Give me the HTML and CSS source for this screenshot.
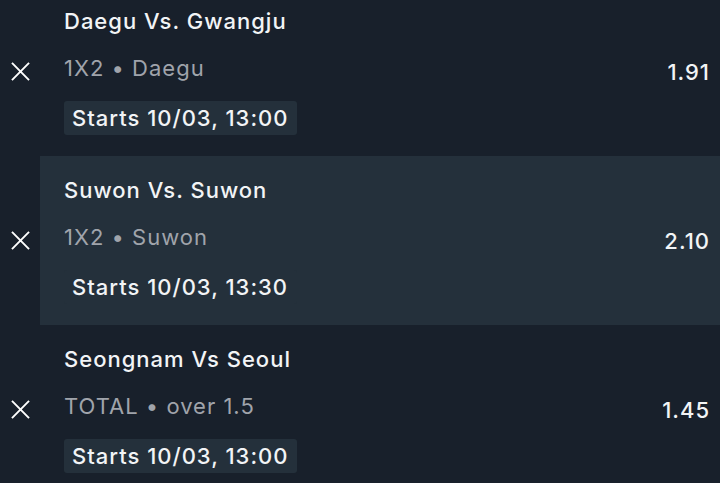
FILE: index.html
```html
<!DOCTYPE html>
<html>
<head>
<meta charset="utf-8">
<link rel="stylesheet" href="styles.css">
</head>
<body>
<div class="list">
  <div class="row">
    <div class="remove"><svg width="20" height="20" viewBox="0 0 20 20"><path d="M1 1L19 19M19 1L1 19" stroke="#fff" stroke-width="2" fill="none"/></svg></div>
    <div class="content">
      <div class="info">
        <div class="title">Daegu Vs. Gwangju</div>
        <div class="market">1X2 • Daegu</div>
        <div class="badge">Starts 10/03, 13:00</div>
      </div>
      <div class="odds">1.91</div>
    </div>
  </div>
  <div class="row active">
    <div class="remove"><svg width="20" height="20" viewBox="0 0 20 20"><path d="M1 1L19 19M19 1L1 19" stroke="#fff" stroke-width="2" fill="none"/></svg></div>
    <div class="content">
      <div class="info">
        <div class="title">Suwon Vs. Suwon</div>
        <div class="market">1X2 • Suwon</div>
        <div class="badge">Starts 10/03, 13:30</div>
      </div>
      <div class="odds">2.10</div>
    </div>
  </div>
  <div class="row">
    <div class="remove"><svg width="20" height="20" viewBox="0 0 20 20"><path d="M1 1L19 19M19 1L1 19" stroke="#fff" stroke-width="2" fill="none"/></svg></div>
    <div class="content">
      <div class="info">
        <div class="title">Seongnam Vs Seoul</div>
        <div class="market">TOTAL • over 1.5</div>
        <div class="badge">Starts 10/03, 13:00</div>
      </div>
      <div class="odds">1.45</div>
    </div>
  </div>
</div>
</body>
</html>
```
FILE: styles.css
```css
html, body {
  margin: 0;
  padding: 0;
  background: #18202b;
  font-family: Inter, "Noto Sans", sans-serif;
  color: #f2f4f6;
  overflow: hidden;
}
.list {
  margin-top: -13px;
}
.row {
  display: flex;
  height: 169px;
}
.remove {
  width: 40px;
  display: flex;
  align-items: center;
  justify-content: center;
}
.remove svg {
  width: 19px;
  height: 19px;
}
.content {
  flex: 1;
  display: flex;
  align-items: center;
  padding: 0 10px 0 24px;
  letter-spacing: 1px;
}
.row.active .content {
  background: #24303b;
}
.info {
  flex: 1;
  display: flex;
  flex-direction: column;
  align-items: flex-start;
  padding-bottom: 6px;
}
.title {
  font-size: 22px;
  font-weight: 500;
  line-height: 28px;
  margin-top: 5px;
}
.market {
  font-size: 22px;
  line-height: 28px;
  color: #a0a4ab;
  margin-top: 19px;
}
.badge {
  margin-top: 19px;
  background: #24303b;
  border-radius: 3px;
  padding: 0 9px 0 8px;
  height: 34px;
  line-height: 34px;
  font-size: 22px;
  font-weight: 500;
}
.odds {
  font-size: 22px;
  font-weight: 500;
}
```
